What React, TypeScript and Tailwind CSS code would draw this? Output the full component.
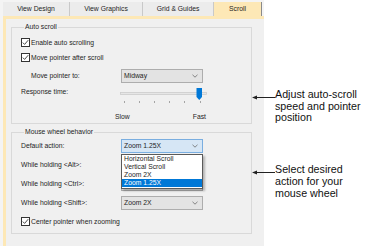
import type { ReactNode } from 'react';

const ui = "font-['Liberation_Sans',Arial,sans-serif] text-[6.8px] leading-[8px] text-[#1e1e1e]";

function Check({ label }: { label: string }) {
  return (
    <div className="flex h-[9px] items-center gap-[1px]">
      <span className="flex h-[9px] w-[9px] items-center justify-center border border-[#333] bg-white">
        <svg width="7" height="7" viewBox="0 0 7 7">
          <polyline points="0.8,3.6 2.6,5.4 6.2,1.2" fill="none" stroke="#333" strokeWidth="0.9" />
        </svg>
      </span>
      <span>{label}</span>
    </div>
  );
}

function Chevron() {
  return (
    <svg width="6" height="4" viewBox="0 0 6 4" className="mr-[4px]">
      <polyline points="0.5,0.8 3,3.2 5.5,0.8" fill="none" stroke="#6a6a6a" strokeWidth="0.8" />
    </svg>
  );
}

function Combo({ value, focused, children }: { value?: string; focused?: boolean; children?: ReactNode }) {
  return (
    <div
      className={
        focused
          ? 'relative flex h-[14px] w-[82px] items-center justify-between border border-[#7aaee0] bg-[#d6e6f5] pl-[2px]'
          : 'relative flex h-[14px] w-[82px] items-center justify-between border border-[#adadad] bg-[#e3e3e3] pl-[2px]'
      }
    >
      <span>{value}</span>
      <Chevron />
      {children}
    </div>
  );
}

function Row({ label, value, focused, children }: { label: string; value?: string; focused?: boolean; children?: ReactNode }) {
  return (
    <div className="flex h-[14px] items-center">
      <span className="w-[100px]">{label}</span>
      <Combo value={value} focused={focused}>
        {children}
      </Combo>
    </div>
  );
}

function Arrow() {
  return (
    <svg width="23" height="7" viewBox="0 0 23 7" className="mt-[5px] shrink-0">
      <line x1="4" y1="3.5" x2="23" y2="3.5" stroke="#222" strokeWidth="1" />
      <polygon points="0,3.5 5,1.6 5,5.4" fill="#222" />
    </svg>
  );
}

export default function App() {
  const tabs = [
    { name: 'View Design', w: 'w-[67px]' },
    { name: 'View Graphics', w: 'w-[73px]' },
    { name: 'Grid & Guides', w: 'w-[71px]' },
  ];
  const ticks = [4, 19, 34, 49, 64, 80];
  const options = ['Horizontal Scroll', 'Vertical Scroll', 'Zoom 2X', 'Zoom 1.25X'];

  return (
    <div className="flex h-[246px] w-[391px] overflow-hidden bg-white">
      {/* Dialog */}
      <div className={`flex w-[264px] shrink-0 flex-col bg-[#f4f4f4] ${ui}`}>
        <div className="ml-[3px] flex h-[16px] pt-[2px]">
          {tabs.map((t) => (
            <div
              key={t.name}
              className={`${t.w} flex items-center justify-center border-r border-[#c9c9c9] bg-[#ececec]`}
            >
              {t.name}
            </div>
          ))}
          <div className="flex w-[48px] items-center justify-center border-r border-[#8a8a8a] bg-[#fde8b6]">
            Scroll
          </div>
        </div>

        <div className="ml-[3px] flex-1 border-l-[3px] border-t-[3px] border-[#fde8b6] bg-[#f0f0f0]">
          {/* Auto scroll */}
          <fieldset className="ml-[5px] mt-[4px] w-[241px] border border-[#d9d9d9] pb-[2px] pl-[9px]">
            <legend className="ml-[3px] px-[1px]">Auto scroll</legend>
            <div className="flex flex-col pt-[7px]">
              <Check label="Enable auto scrolling" />
              <div className="mt-[6px]">
                <Check label="Move pointer after scroll" />
              </div>
              <div className="mt-[7px] flex h-[14px] items-center">
                <span className="w-[100px] pl-[10px]">Move pointer to:</span>
                <Combo value="Midway" />
              </div>
              <div className="mt-[5px] flex items-start">
                <span className="w-[99px]">Response time:</span>
                <svg width="88" height="16" viewBox="0 0 88 16">
                  <rect x="0.5" y="4.5" width="86" height="2" fill="#e6e6e6" stroke="#cdcdcd" strokeWidth="0.8" />
                  {ticks.map((x) => (
                    <rect key={x} x={x} y="13" width="1" height="2" fill="#a5a5a5" />
                  ))}
                  <path d="M76.5 0 H82 V9 L79.25 12 L76.5 9 Z" fill="#0078d7" />
                </svg>
              </div>
              <div className="mt-[9px] flex h-[8px] w-[185px] justify-between pl-[94px]">
                <span>Slow</span>
                <span>Fast</span>
              </div>
            </div>
          </fieldset>

          {/* Mouse wheel */}
          <fieldset className="ml-[5px] mt-[4px] w-[241px] border border-[#d9d9d9] pb-[7px] pl-[9px]">
            <legend className="ml-[3px] px-[1px]">Mouse wheel behavior</legend>
            <div className="flex flex-col gap-[5px] pt-[3px]">
              <Row label="Default action:" value="Zoom 1.25X" focused>
                <div className="absolute left-[-1px] top-[14px] z-10 w-[82px] border border-[#5a5a5a] bg-white pb-[1px] shadow-[2px_2px_2px_rgba(0,0,0,0.25)]">
                  {options.map((o) => (
                    <div
                      key={o}
                      className={
                        o === 'Zoom 1.25X'
                          ? 'h-[8px] bg-[#0078d7] pl-[2px] text-white'
                          : 'h-[8px] pl-[2px]'
                      }
                    >
                      {o}
                    </div>
                  ))}
                </div>
              </Row>
              {/* these two combos sit under the open list */}
              <Row label="While holding <Alt>:" />
              <Row label="While holding <Ctrl>:" />
              <Row label="While holding <Shift>:" value="Zoom 2X" />
              <div className="mt-[2px]">
                <Check label="Center pointer when zooming" />
              </div>
            </div>
          </fieldset>
        </div>
      </div>

      {/* Callouts */}
      <div className="-ml-[12px] flex flex-col pt-[89px] font-['Liberation_Sans',Arial,sans-serif] text-[10.7px] leading-[11.7px] text-[#111]">
        <div className="flex">
          <Arrow />
          <p>
            Adjust auto-scroll
            <br />
            speed and pointer
            <br />
            position
          </p>
        </div>
        <div className="mt-[40px] flex">
          <Arrow />
          <p>
            Select desired
            <br />
            action for your
            <br />
            mouse wheel
          </p>
        </div>
      </div>
    </div>
  );
}
